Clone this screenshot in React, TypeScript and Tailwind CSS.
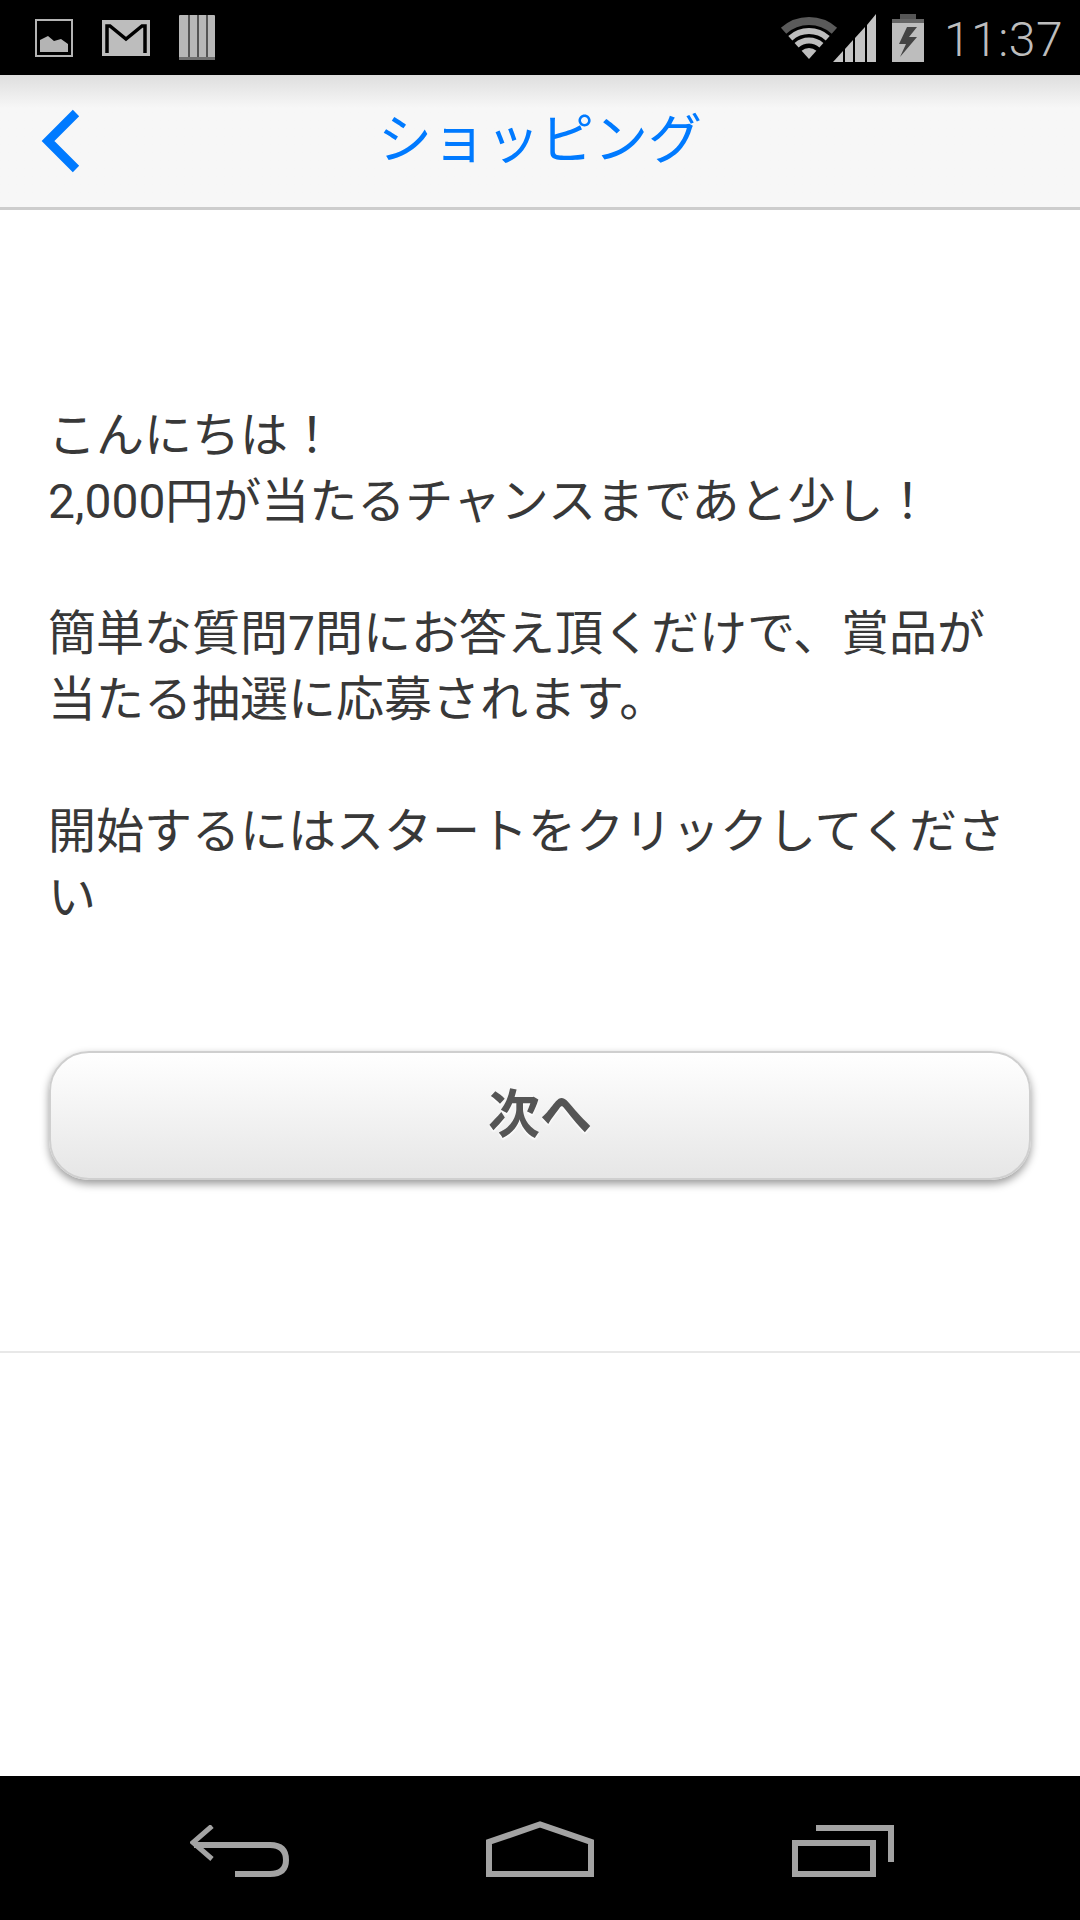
const cjk = 'font-["Roboto","Noto_Sans_CJK_JP",sans-serif]';

function PictureIcon() {
  return (
    <svg width="38" height="38" viewBox="0 0 38 38">
      <rect x="1" y="1" width="36" height="36" fill="none" stroke="#b4b4b4" strokeWidth="2" />
      <path d="M5 33 V21 L13 17 L19 22 L26 20 L33 25 V33 Z" fill="#b4b4b4" />
    </svg>
  );
}

function GmailIcon() {
  return (
    <svg width="48" height="36" viewBox="0 0 48 36">
      <rect width="48" height="36" fill="#bdbdbd" />
      <path d="M5 33 V6 H8 L24 19 L40 6 H43 V33" fill="none" stroke="#000" strokeWidth="3.5" />
    </svg>
  );
}

function BooksIcon() {
  return (
    <svg width="36" height="46" viewBox="0 0 36 46">
      <rect width="36" height="44" rx="1" fill="#b8b8b8" />
      <rect x="9" width="2" height="44" fill="#555" />
      <rect x="18" width="2" height="44" fill="#555" />
      <rect x="27" width="2" height="44" fill="#555" />
      <rect y="42" width="36" height="3" fill="#707070" />
    </svg>
  );
}

function WifiIcon() {
  return (
    <svg width="58" height="46" viewBox="0 0 58 46" fill="none">
      <path d="M3.6 15.8 A38 38 0 0 1 54.4 15.8" stroke="#5a5a5a" strokeWidth="8" />
      <path d="M10.3 23.2 A28 28 0 0 1 47.7 23.2" stroke="#bdbdbd" strokeWidth="6" />
      <path d="M16.6 30.3 A18.5 18.5 0 0 1 41.4 30.3" stroke="#bdbdbd" strokeWidth="6" />
      <path d="M29 44 L21.6 35.8 A11 11 0 0 1 36.4 35.8 Z" fill="#bdbdbd" />
    </svg>
  );
}

function SignalIcon() {
  return (
    <svg width="43" height="48" viewBox="0 0 43 48">
      <path d="M0 48 L10 37 V48 Z" fill="#c4c4c4" />
      <path d="M12 35 L20 26 V48 H12 Z" fill="#c4c4c4" />
      <path d="M22 24 L32 13 V48 H22 Z" fill="#c4c4c4" />
      <path d="M34 11 L43 0 V48 H34 Z" fill="#c4c4c4" />
    </svg>
  );
}

function BatteryIcon() {
  return (
    <svg width="32" height="48" viewBox="0 0 32 48">
      <rect x="8" width="16" height="6" fill="#555" />
      <rect y="5" width="32" height="5" fill="#666" />
      <rect y="9" width="32" height="39" fill="#bdbdbd" />
      <path d="M15 13 L7 30 H14 L8 43 L25 23 H17 L25 13 Z" fill="#444" />
    </svg>
  );
}

function BackKey() {
  return (
    <svg width="100" height="52" viewBox="0 0 100 52" fill="none" stroke="#a3a3a3">
      <path d="M22 1 L3 17.5 L22 34" strokeWidth="5" />
      <path d="M4 20 H80 Q96 20 96 35 Q96 49 80 49 H45" strokeWidth="6" />
    </svg>
  );
}

function HomeKey() {
  return (
    <svg width="108" height="56" viewBox="0 0 108 56" fill="none" stroke="#a3a3a3" strokeWidth="6">
      <path d="M3 53 V21 L54 3.5 L105 21 V53 Z" />
    </svg>
  );
}

function RecentsKey() {
  return (
    <svg width="102" height="52" viewBox="0 0 102 52" fill="none" stroke="#a3a3a3" strokeWidth="6">
      <rect x="3" y="18" width="78" height="31" />
      <path d="M24 3 H99 V37" />
    </svg>
  );
}

export default function App() {
  return (
    <div className={`flex h-[1920px] w-[1080px] flex-col overflow-hidden bg-white ${cjk}`}>
      {/* Status bar */}
      <div className="flex h-[75px] items-center justify-between bg-black pl-[35px] pr-[17px]">
        <div className="flex items-center gap-[29px]">
          <PictureIcon />
          <GmailIcon />
          <BooksIcon />
        </div>
        <div className="flex items-center">
          <WifiIcon />
          <div className="-ml-[5px]">
            <SignalIcon />
          </div>
          <div className="ml-[16px]">
            <BatteryIcon />
          </div>
          <span className="mt-[4px] ml-[20px] font-['Roboto'] text-[48px] leading-none font-light tracking-[0.5px] text-[#bdbdbd]">11:37</span>
        </div>
      </div>

      {/* Header */}
      <header className="grid h-[135px] grid-cols-[1fr_auto_1fr] items-center border-b-[3px] border-[#cdcdcd] bg-gradient-to-b from-[#dedede] via-[#f7f7f7] via-25% to-[#f7f7f7]">
        <div className="pl-[41px]">
          <svg width="40" height="64" viewBox="0 0 40 64" fill="none" stroke="#007aff" strokeWidth="9">
            <path d="M35 4 L7 32 L35 60" />
          </svg>
        </div>
        <h1 className="text-[54px] leading-none font-normal text-[#007aff]">ショッピング</h1>
        <div />
      </header>

      {/* Content */}
      <main className="flex-1">
        <div className="border-b-[2px] border-[#e8e8e8] px-[49px] pt-[193px] pb-[171px]">
          <p className="-ml-[1px] text-[48px] leading-[66px] text-[#383838]">
            こんにちは！
            <br />
            2,000円が当たるチャンスまであと少し！
            <br />
            <br />
            簡単な質問7問にお答え頂くだけで、賞品が当たる抽選に応募されます。
            <br />
            <br />
            開始するにはスタートをクリックしてください
          </p>
          <button className="mt-[120px] flex h-[129px] w-full items-center justify-center rounded-[40px] border-[2px] border-[#cfcfcf] bg-gradient-to-b from-white to-[#e6e6e6] text-[52px] font-bold text-[#555555] shadow-[0_4px_8px_rgba(0,0,0,0.4)] [text-shadow:0_2px_2px_#ffffff]">
            次へ
          </button>
        </div>
      </main>

      {/* Navigation bar */}
      <nav className="flex h-[144px] items-start justify-between bg-black pt-[45px] pl-[190px] pr-[186px]">
        <div className="pt-[4px]">
          <BackKey />
        </div>
        <div className="-ml-[2px]">
          <HomeKey />
        </div>
        <div className="pt-[4px]">
          <RecentsKey />
        </div>
      </nav>
    </div>
  );
}
